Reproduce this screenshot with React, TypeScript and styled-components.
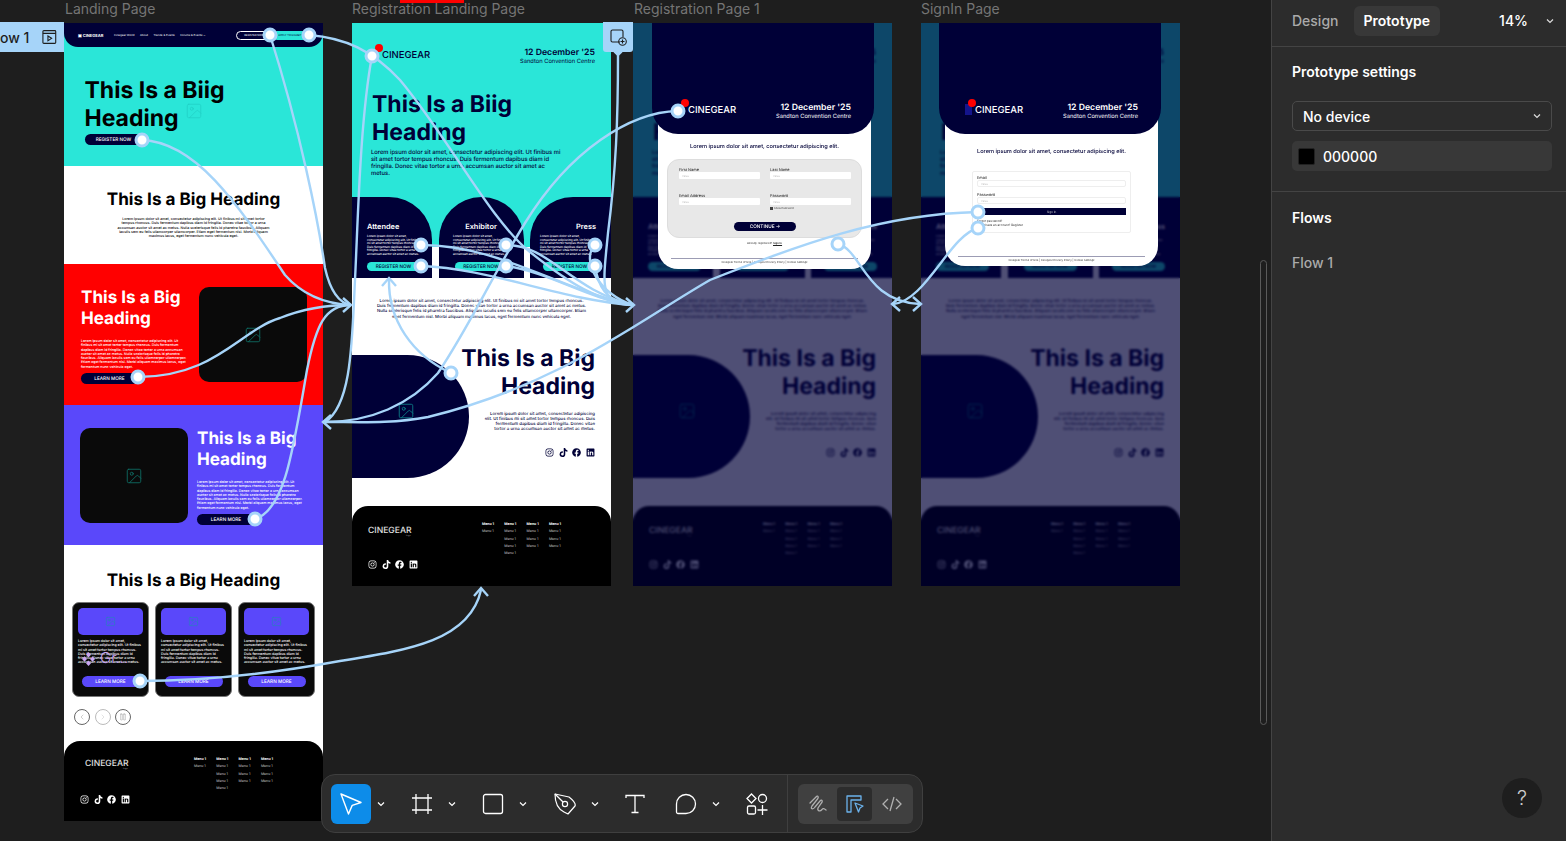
import React from 'react'
import styled, { createGlobalStyle } from 'styled-components'
import { Image, ChevronLeft, ChevronRight, Pause } from 'lucide-react'
import { FaInstagram, FaTiktok, FaFacebook, FaLinkedin } from 'react-icons/fa'

const navy = '#000037'
const teal = '#2ae6d8'
const violet = '#5a48fa'
const wire = '#a6d4f9'

const LOREM_SHORT =
  'Lorem ipsum dolor sit amet, consectetur adipiscing elit. Ut finibus mi sit amet tortor tempus rhoncus. Duis fermentum dapibus diam id fringilla. Donec vitae tortor a urna accumsan auctor sit amet ac metus.'
const LOREM_LONG =
  LOREM_SHORT +
  ' Nulla scelerisque felis id pharetra faucibus. Aliquam iaculis sem eu felis ullamcorper ullamcorper. Etiam eget fermentum nisl. Morbi aliquam maximus lacus, eget fermentum nunc vehicula eget.'

const Global = createGlobalStyle`
  html, body { margin: 0; height: 100%; background: #1e1e1e; overflow: hidden; }
  body { font-family: Inter, "Liberation Sans", sans-serif; }
  #root { height: 100%; }
  * { box-sizing: border-box; }
`

const Shell = styled.div`
  display: flex;
  width: 1566px;
  height: 841px;
`

const Canvas = styled.main`
  position: relative;
  flex: 1;
  overflow: hidden;
  background: #1e1e1e;
`

const FrameLabel = styled.div<{ $x: number }>`
  position: absolute;
  top: 0;
  left: ${p => p.$x}px;
  font-size: 14px;
  line-height: 17px;
  color: #757575;
`

/* text in the frames is zoomed out, so it needs linear glyph advances */
const Frame = styled.section<{ $x: number }>`
  position: absolute;
  z-index: 0;
  top: 23px;
  left: ${p => p.$x}px;
  width: 259px;
  display: flex;
  flex-direction: column;
  overflow: hidden;
  background: #fff;
  text-rendering: geometricPrecision;
`

const Lorem = styled.p<{ $size: number; $lh: number; $color?: string; $align?: string; $w?: number }>`
  margin: 0;
  font-size: ${p => p.$size}px;
  line-height: ${p => p.$lh}px;
  font-weight: 500;
  color: ${p => p.$color || '#000'};
  text-align: ${p => p.$align || 'left'};
  ${p => (p.$w ? `width: ${p.$w}px;` : '')}
`

const Heading = styled.h2<{ $size?: number; $lh?: number; $color?: string; $align?: string }>`
  margin: 0;
  font-size: ${p => p.$size || 23}px;
  line-height: ${p => p.$lh || 28}px;
  font-weight: 700;
  white-space: nowrap;
  color: ${p => p.$color || '#000'};
  text-align: ${p => p.$align || 'left'};
`

const Pill = styled.div<{ $bg?: string; $color?: string; $w: number; $h?: number }>`
  display: flex;
  align-items: center;
  justify-content: center;
  width: ${p => p.$w}px;
  height: ${p => p.$h || 11}px;
  border-radius: 99px;
  background: ${p => p.$bg || navy};
  color: ${p => p.$color || '#fff'};
  font-size: 4.7px;
  font-weight: 500;
  white-space: nowrap;
`

/* landing page */
const Hero = styled.div`
  position: relative;
  height: 143px;
  background: ${teal};
`

const Nav = styled.nav`
  display: flex;
  align-items: center;
  height: 24px;
  padding: 0 14px;
  background: ${navy};
  border-radius: 0 0 14px 14px;
  color: #fff;
  font-size: 2.8px;
`

const NavBrand = styled.div`
  display: flex;
  align-items: center;
  gap: 1px;
  width: 36px;
  font-size: 4px;
  font-weight: 700;
`

const NavLinks = styled.div`
  display: flex;
  gap: 5.5px;
  flex: 1;
`

const NavButtons = styled.div`
  display: flex;
  margin-right: 1px;
`

const NavButton = styled.div<{ $filled?: boolean }>`
  display: flex;
  align-items: center;
  justify-content: center;
  width: 36px;
  height: 9px;
  border-radius: 9px;
  border: 0.5px solid ${p => (p.$filled ? teal : '#fff')};
  background: ${p => (p.$filled ? teal : 'transparent')};
  color: ${p => (p.$filled ? navy : '#fff')};
  font-size: 2.6px;
`

const HeroBody = styled.div`
  display: flex;
  flex-direction: column;
  gap: 2px;
  padding: 29px 0 0 20.5px;
`

const FloatingIcon = styled.div<{ $x: number; $y: number; $color: string }>`
  position: absolute;
  left: ${p => p.$x}px;
  top: ${p => p.$y}px;
  display: flex;
  color: ${p => p.$color};
  svg { width: 18px; height: 18px; }
`

const Intro = styled.div`
  display: flex;
  flex-direction: column;
  align-items: center;
  gap: 6px;
  height: 98px;
  padding-top: 23px;
  background: #fff;
`

const Split = styled.div<{ $bg: string; $reverse?: boolean }>`
  display: flex;
  flex-direction: ${p => (p.$reverse ? 'row-reverse' : 'row')};
  justify-content: flex-end;
  align-items: flex-start;
  gap: 9px;
  height: ${p => (p.$reverse ? 140 : 141)}px;
  padding: 23px 16px 0;
  background: ${p => p.$bg};
`

const SplitText = styled.div`
  display: flex;
  flex-direction: column;
  align-items: flex-start;
  width: 109px;
  color: #fff;
`

const SplitHeading = styled(Heading)`
  margin-bottom: 10px;
`

const SplitLorem = styled(Lorem)`
  margin-bottom: 4px;
  height: 30px;
`

const Picture = styled.div`
  display: flex;
  align-items: center;
  justify-content: center;
  flex: none;
  width: 108px;
  height: 95px;
  border-radius: 10px;
  background: #0a0a0a;
  color: #0e6b62;
  svg { width: 18px; height: 18px; }
`

const CardSection = styled.div`
  display: flex;
  flex-direction: column;
  align-items: center;
  height: 196px;
  padding-top: 25px;
`

const CardRow = styled.div`
  display: flex;
  gap: 6px;
  margin-top: 10px;
  position: relative;
`

const Card = styled.div`
  display: flex;
  flex-direction: column;
  width: 77px;
  height: 95px;
  padding: 5px 5px 0;
  border-radius: 7px;
  background: #0a0a0a;
  border: 0.5px solid #777;
`

const CardArt = styled.div`
  display: flex;
  align-items: center;
  justify-content: center;
  flex: none;
  height: 27px;
  border-radius: 5px;
  background: ${violet};
  color: #2a7fc0;
  svg { width: 11px; height: 11px; }
`

const CardText = styled(Lorem)`
  margin-top: 4px;
  height: 29px;
  color: #fff;
`

const CardButton = styled(Pill)`
  flex: none;
  margin: 8px auto 0;
`

const BadgeLabel = styled.div`
  position: absolute;
  left: 10px;
  top: 47px;
  display: flex;
  align-items: flex-end;
  gap: 5px;
  color: #c9a5f3;
  font-size: 15px;
  line-height: 17px;
  font-weight: 300;
`

const Controls = styled.div`
  display: flex;
  gap: 4.5px;
  align-self: flex-start;
  margin: 12px 0 0 10px;
`

const RoundControl = styled.div<{ $soft?: boolean }>`
  display: flex;
  align-items: center;
  justify-content: center;
  width: 16px;
  height: 16px;
  border-radius: 50%;
  border: 0.7px solid ${p => (p.$soft ? '#bbb' : '#666')};
  color: ${p => (p.$soft ? '#aaa' : '#666')};
  svg { width: 8px; height: 8px; }
`

/* footer */
const FooterBar = styled.footer`
  display: flex;
  height: 80px;
  padding: 15px 0 0 16px;
  background: #000;
  border-radius: 16px 16px 0 0;
  color: #fff;
`

const FooterLeft = styled.div`
  display: flex;
  flex-direction: column;
  width: 114px;
`

const FooterLogo = styled.div<{ $inset: number; $lift: number }>`
  position: relative;
  margin: ${p => 6 - p.$lift}px 0 ${p => p.$lift - 1}px ${p => p.$inset}px;
  font-size: 8.6px;
  line-height: 10px;
  font-weight: 500;
  color: #e0e0e0;
`

const TinyMark = styled.span`
  position: absolute;
  left: 38px;
  top: 9px;
  font-size: 2px;
  line-height: 3px;
  color: #999;
`

const Socials = styled.div<{ $color?: string; $mt?: number }>`
  display: flex;
  gap: 4.6px;
  margin-top: ${p => p.$mt ?? 24}px;
  color: ${p => p.$color || '#fff'};
  svg { width: 9px; height: 9px; display: block; }
`

const MenuGrid = styled.div`
  display: flex;
  gap: 9.3px;
`

const MenuColumn = styled.div`
  display: flex;
  flex-direction: column;
  width: 13px;
`

const MenuItem = styled.span<{ $head?: boolean }>`
  font-size: 3.5px;
  line-height: 7.3px;
  white-space: nowrap;
  font-weight: ${p => (p.$head ? 700 : 400)};
  color: ${p => (p.$head ? '#fff' : '#c8c8c8')};
`

/* registration landing */
const RegHero = styled.div`
  height: 174px;
  padding: 25px 16px 0 20px;
  background: ${teal};
  color: ${navy};
`

const BrandRow = styled.div<{ $color?: string }>`
  display: flex;
  justify-content: space-between;
  align-items: flex-start;
  color: ${p => p.$color || navy};
`

const Brand = styled.div`
  position: relative;
  margin: 2px 0 0 10px;
  font-size: 9.5px;
  line-height: 12px;
  font-weight: 500;
`

const BrandDot = styled.span`
  position: absolute;
  left: -7px;
  top: -6px;
  width: 8px;
  height: 8px;
  border-radius: 50%;
  background: #ff0000;
`

const BrandBlock = styled.span`
  position: absolute;
  left: -10px;
  top: -1px;
  width: 7px;
  height: 11px;
  background: #14148c;
`

const EventInfo = styled.div`
  text-align: right;
  font-size: 8.7px;
  line-height: 10px;
  font-weight: 600;
`

const Venue = styled.div`
  font-size: 5.75px;
  line-height: 8px;
  font-weight: 400;
`

const RegHeroHeading = styled(Heading)`
  margin-top: 24px;
`

const RegHeroLorem = styled(Lorem)`
  margin: 2.5px 0 0 -1px;
`

const ArchRow = styled.div`
  display: grid;
  grid-template-columns: 80px 85px 81px;
  column-gap: 6.5px;
  height: 81px;
  background: linear-gradient(${teal} 50px, #fff 50px);
`

const Arch = styled.div<{ $radius: string; $align: string }>`
  display: flex;
  flex-direction: column;
  align-items: ${p => p.$align};
  padding: 26px 15px 7px;
  border-radius: ${p => p.$radius};
  background: ${navy};
  color: #fff;
  text-align: ${p => (p.$align === 'flex-end' ? 'right' : p.$align === 'center' ? 'center' : 'left')};
`

const ArchTitle = styled.div`
  font-size: 7.4px;
  line-height: 8px;
  font-weight: 600;
`

const ArchLorem = styled(Lorem)`
  margin-top: 4px;
  width: 56px;
  color: #fff;
`

const ArchButton = styled(Pill)`
  margin-top: auto;
  flex: none;
`

const RegBody = styled.div`
  display: flex;
  flex-direction: column;
  height: 228px;
  padding-top: 21px;
`

const RegRow = styled.div`
  display: flex;
  justify-content: space-between;
  margin-top: 24px;
`

const Blob = styled.div`
  display: flex;
  align-items: center;
  justify-content: center;
  flex: none;
  width: 117px;
  height: 123px;
  margin-top: 11px;
  padding: 0 9px 10px 0;
  border-radius: 0 62px 62px 0;
  background: ${navy};
  color: #0c7c86;
  svg { width: 18px; height: 18px; }
`

const RegRight = styled.div`
  display: flex;
  flex-direction: column;
  align-items: flex-end;
  flex: none;
  margin-left: -20px;
  padding-right: 16px;
`

const RegRightLorem = styled(Lorem)`
  margin-top: 12px;
`

/* dialogs */
const Dim = styled.div`
  position: absolute;
  inset: 0;
  background: rgba(0, 0, 55, 0.69);
  backdrop-filter: blur(1px);
`

const Dialog = styled.div<{ $left: number }>`
  position: absolute;
  top: 0;
  left: ${p => p.$left}px;
  width: 222px;
  display: flex;
  flex-direction: column;
`

const DialogHead = styled.div`
  position: relative;
  z-index: 1;
  height: 111px;
  padding: 80px 23px 0 26px;
  border-radius: 0 0 26px 26px;
  background: ${navy};
`

const DialogBody = styled.div<{ $h: number }>`
  display: flex;
  flex-direction: column;
  align-items: center;
  height: ${p => p.$h}px;
  margin: -14px 3px 0 6px;
  padding-top: 14px;
  border-radius: 0 0 20px 20px;
  background: #fff;
`

const DialogLead = styled(Lorem)<{ $mt: number }>`
  margin-top: ${p => p.$mt}px;
  color: ${navy};
`

const GreyForm = styled.div`
  display: grid;
  grid-template-columns: 81px 81px;
  column-gap: 10px;
  align-content: start;
  width: 195px;
  height: 79px;
  margin-top: 8px;
  padding: 8px 11px;
  border-radius: 12px;
  background: #e8e8e8;
  border: 0.5px solid #ddd;
`

const Field = styled.div<{ $h?: number }>`
  display: flex;
  flex-direction: column;
  height: ${p => p.$h || 26}px;
`

const FieldLabel = styled.span`
  font-size: 3.9px;
  line-height: 4px;
  color: #222;
`

const FieldInput = styled.div`
  display: flex;
  align-items: center;
  height: 7px;
  padding-left: 3px;
  background: #fff;
  border-radius: 1px;
  font-size: 2.6px;
  color: #bbb;
`

const ShowPassword = styled.div`
  display: flex;
  align-items: center;
  gap: 1px;
  margin-top: 1px;
  font-size: 2.6px;
  color: #333;
`

const TickBox = styled.i`
  width: 3px;
  height: 3px;
  background: #444;
`

const Continue = styled(Pill)`
  grid-column: 1 / 3;
  justify-self: center;
  margin-top: 2px;
`

const SmallNote = styled.div<{ $mt: number }>`
  margin-top: ${p => p.$mt}px;
  font-size: 2.75px;
  line-height: 4px;
  color: #222;
  white-space: nowrap;
  u { font-weight: 600; }
`

const Rule = styled.hr<{ $mt: number }>`
  width: 187px;
  margin: ${p => p.$mt}px 0 0;
  border: 0;
  border-top: 0.6px solid #9c9cb4;
`

const SignCard = styled.div`
  display: flex;
  flex-direction: column;
  width: 159px;
  height: 62px;
  margin-top: 15px;
  padding: 4px 4px 0;
  border: 0.5px solid #eee;
  border-radius: 2px;
`

const SignInput = styled(FieldInput)`
  border: 0.5px solid #eee;
  border-radius: 2px;
`

const SignButton = styled.div`
  display: flex;
  align-items: center;
  justify-content: center;
  height: 7px;
  margin-top: -2px;
  background: ${navy};
  color: #ccc;
  font-size: 3px;
`

const SignLinks = styled.div`
  margin-top: 4px;
  font-size: 3px;
  line-height: 4.4px;
  color: #222;
`

/* overlays on the canvas */
const Wires = styled.svg`
  position: absolute;
  inset: 0;
  width: 100%;
  height: 100%;
  pointer-events: none;
`

const FlowChip = styled.div`
  position: absolute;
  left: 0;
  top: 22px;
  display: flex;
  align-items: center;
  justify-content: flex-end;
  gap: 13px;
  width: 64px;
  height: 30px;
  padding-right: 7px;
  background: ${wire};
  color: #1e1e1e;
  font-size: 14px;
  font-weight: 500;
  white-space: nowrap;
`

const AddTab = styled.div`
  position: absolute;
  left: 603px;
  top: 22px;
  display: flex;
  align-items: center;
  justify-content: center;
  width: 30px;
  height: 30px;
  background: ${wire};
  border-radius: 0 0 3px 3px;
  &::after {
    content: '';
    position: absolute;
    left: 11px;
    top: 25px;
    width: 8px;
    height: 8px;
    background: ${wire};
    border-radius: 2px;
    transform: rotate(45deg);
  }
`

const RedMark = styled.div`
  position: absolute;
  left: 400px;
  top: 0;
  width: 64px;
  height: 3px;
  background: #ff0000;
`

const ScrollThumb = styled.div`
  position: absolute;
  left: 1260px;
  top: 260px;
  width: 7px;
  height: 465px;
  border: 1px solid #5a5a5a;
  border-radius: 4px;
`

const Toolbar = styled.div`
  position: absolute;
  left: 321px;
  top: 774px;
  display: flex;
  align-items: center;
  width: 602px;
  height: 59px;
  padding-left: 9px;
  background: #2c2c2c;
  border: 1px solid #3f3f3f;
  border-radius: 14px;
`

const ToolGroup = styled.div<{ $gap?: number }>`
  display: flex;
  align-items: center;
  margin-right: ${p => p.$gap ?? 13}px;
  color: #fff;
`

const ToolButton = styled.div<{ $active?: boolean }>`
  display: flex;
  align-items: center;
  justify-content: center;
  width: 40px;
  height: 40px;
  border-radius: 6px;
  background: ${p => (p.$active ? '#0d8ce9' : 'transparent')};
`

const ToolChevron = styled.div`
  display: flex;
  justify-content: center;
  width: 16px;
  margin-left: 2px;
`

const ToolDivider = styled.div`
  width: 1px;
  height: 59px;
  margin: 0 10px 0 0;
  background: #3f3f3f;
`

const ModeGroup = styled.div`
  display: flex;
  align-items: center;
  width: 115px;
  height: 40px;
  padding: 0 2px;
  border-radius: 6px;
  background: #404040;
`

const ModeButton = styled.div<{ $active?: boolean }>`
  display: flex;
  align-items: center;
  justify-content: center;
  width: 36px;
  height: 34px;
  margin-right: 2px;
  border-radius: 4px;
  background: ${p => (p.$active ? '#2c2c2c' : 'transparent')};
`

const Panel = styled.aside`
  position: relative;
  flex: none;
  width: 295px;
  background: #2c2c2c;
  border-left: 1px solid #444;
  color: #fff;
  font-size: 14px;
`

const PanelTabs = styled.div`
  display: flex;
  align-items: center;
  height: 47px;
  padding: 0 12px 5px 20px;
  border-bottom: 1px solid #444;
  font-weight: 500;
`

const Tab = styled.div<{ $active?: boolean }>`
  display: flex;
  align-items: center;
  height: 30px;
  padding: 0 10px;
  margin-left: ${p => (p.$active ? 5 : 0)}px;
  ${p => (p.$active ? '' : 'padding-left: 0;')}
  border-radius: 6px;
  background: ${p => (p.$active ? '#383838' : 'transparent')};
  color: ${p => (p.$active ? '#fff' : '#aaa')};
  font-weight: ${p => (p.$active ? 600 : 500)};
`

const Zoom = styled.div`
  margin-left: auto;
  margin-right: 18px;
`

const PanelBlock = styled.div`
  padding: 16px 14px 20px 20px;
  border-bottom: 1px solid #444;
`

const PanelTitle = styled.div`
  font-weight: 600;
  line-height: 18px;
`

const SelectBox = styled.div`
  display: flex;
  align-items: center;
  justify-content: space-between;
  height: 30px;
  margin-top: 20px;
  padding: 0 10px;
  border: 1px solid #4a4a4a;
  border-radius: 5px;
  font-weight: 500;
`

const ColorBox = styled.div`
  display: flex;
  align-items: center;
  gap: 8px;
  height: 30px;
  margin-top: 10px;
  padding: 0 6px;
  border-radius: 5px;
  background: #383838;
  font-weight: 500;
`

const Swatch = styled.i`
  width: 17px;
  height: 17px;
  border-radius: 2px;
  background: #000;
  border: 1px solid #222;
`

const FlowsBlock = styled.div`
  padding: 17px 20px;
`

const FlowName = styled.div`
  margin-top: 27px;
  line-height: 18px;
  color: #aaa;
  font-weight: 500;
`

const HelpButton = styled.div`
  position: absolute;
  right: 24px;
  bottom: 23px;
  display: flex;
  align-items: center;
  justify-content: center;
  width: 40px;
  height: 40px;
  border-radius: 50%;
  background: #1e1e1e;
  color: #ccc;
  font-size: 20px;
  font-weight: 300;
`

const Chevron = ({ color = '#fff' }: { color?: string }) => (
  <svg width="8" height="6" viewBox="0 0 8 6" fill="none">
    <path d="M1 1.5 4 4.5 7 1.5" stroke={color} strokeWidth="1.2" />
  </svg>
)

const SocialIcons = ({ color, mt }: { color?: string; mt?: number }) => (
  <Socials $color={color} $mt={mt}>
    <FaInstagram />
    <FaTiktok />
    <FaFacebook />
    <FaLinkedin />
  </Socials>
)

const menuRows = [2, 5, 4, 4]

const Footer = ({ inset, lift }: { inset: number; lift: number }) => (
  <FooterBar>
    <FooterLeft>
      <FooterLogo $inset={inset} $lift={lift}>
        CINEGEAR
        <TinyMark>Logo</TinyMark>
      </FooterLogo>
      <SocialIcons />
    </FooterLeft>
    <MenuGrid>
      {menuRows.map((rows, c) => (
        <MenuColumn key={c}>
          {Array.from({ length: rows }).map((_, r) => (
            <MenuItem key={r} $head={r === 0}>
              Menu 1
            </MenuItem>
          ))}
        </MenuColumn>
      ))}
    </MenuGrid>
  </FooterBar>
)

const LandingPage = () => (
  <Frame $x={64}>
    <Hero>
      <Nav>
        <NavBrand>▣ CINEGEAR</NavBrand>
        <NavLinks>
          <span>Cinegear World</span>
          <span>About</span>
          <span>Trends & Events</span>
          <span>Forums & Events ⌄</span>
        </NavLinks>
        <NavButtons>
          <NavButton>REGISTER NOW</NavButton>
          <NavButton $filled>APPLY TO EXHIBIT</NavButton>
        </NavButtons>
      </Nav>
      <HeroBody>
        <Heading>
          This Is a Biig
          <br />
          Heading
        </Heading>
        <Pill $w={58}>REGISTER NOW</Pill>
      </HeroBody>
      <FloatingIcon $x={121} $y={79} $color="#22cfc4">
        <Image strokeWidth={1} />
      </FloatingIcon>
    </Hero>
    <Intro>
      <Heading $size={17.1} $lh={22}>
        This Is a Big Heading
      </Heading>
      <Lorem $size={3.6} $lh={4.3} $align="center" $w={153}>
        {LOREM_LONG}
      </Lorem>
    </Intro>
    <Split $bg="#ff0000">
      <SplitText>
        <SplitHeading $size={17.1} $lh={21} $color="#fff">
          This Is a Big
          <br />
          Heading
        </SplitHeading>
        <SplitLorem $size={3.5} $lh={4.3} $color="#fff">
          {LOREM_LONG}
        </SplitLorem>
        <Pill $w={57}>LEARN MORE</Pill>
      </SplitText>
      <Picture>
        <Image strokeWidth={1.2} />
      </Picture>
    </Split>
    <Split $bg={violet} $reverse>
      <SplitText>
        <SplitHeading $size={17.1} $lh={21} $color="#fff">
          This Is a Big
          <br />
          Heading
        </SplitHeading>
        <SplitLorem $size={3.5} $lh={4.3} $color="#fff">
          {LOREM_LONG}
        </SplitLorem>
        <Pill $w={58}>LEARN MORE</Pill>
      </SplitText>
      <Picture>
        <Image strokeWidth={1.2} />
      </Picture>
    </Split>
    <CardSection>
      <Heading $size={17.1} $lh={22}>
        This Is a Big Heading
      </Heading>
      <CardRow>
        {[0, 1, 2].map(i => (
          <Card key={i}>
            <CardArt>
              <Image strokeWidth={1.5} />
            </CardArt>
            <CardText $size={3.55} $lh={4.3}>
              {LOREM_SHORT}
            </CardText>
            <CardButton $w={58} $bg={violet}>
              LEARN MORE
            </CardButton>
          </Card>
        ))}
        <BadgeLabel>
          <svg width="13" height="14" viewBox="0 0 13 14" fill="currentColor">
            <path d="M6.5 0 9 2.8 6.5 5.6 4 2.8ZM6.5 8.4 9 11.2 6.5 14 4 11.2ZM2.5 4.2 5 7 2.5 9.8 0 7ZM10.5 4.2 13 7 10.5 9.8 8 7Z" />
          </svg>
          <span>Gr...</span>
        </BadgeLabel>
      </CardRow>
      <Controls>
        <RoundControl>
          <ChevronLeft strokeWidth={1} />
        </RoundControl>
        <RoundControl $soft>
          <ChevronRight strokeWidth={1} />
        </RoundControl>
        <RoundControl>
          <Pause strokeWidth={1} />
        </RoundControl>
      </Controls>
    </CardSection>
    <Footer inset={5} lift={3} />
  </Frame>
)

const RegistrationLanding = () => (
  <>
    <RegHero>
      <BrandRow>
        <Brand>
          <BrandDot />
          CINEGEAR
        </Brand>
        <EventInfo>
          12 December '25
          <Venue>Sandton Convention Centre</Venue>
        </EventInfo>
      </BrandRow>
      <RegHeroHeading $color={navy}>
        This Is a Biig
        <br />
        Heading
      </RegHeroHeading>
      <RegHeroLorem $size={5.8} $lh={7} $color={navy} $w={191}>
        {LOREM_SHORT}
      </RegHeroLorem>
    </RegHero>
    <ArchRow>
      <Arch $radius="0 43px 0 0" $align="flex-start">
        <ArchTitle>Attendee</ArchTitle>
        <ArchLorem $size={3} $lh={3.6}>
          {LOREM_SHORT}
        </ArchLorem>
        <ArchButton $w={53} $h={9} $bg={teal} $color={navy}>
          REGISTER NOW
        </ArchButton>
      </Arch>
      <Arch $radius="43px 43px 0 0" $align="center">
        <ArchTitle>Exhibitor</ArchTitle>
        <ArchLorem $size={3} $lh={3.6}>
          {LOREM_SHORT}
        </ArchLorem>
        <ArchButton $w={53} $h={9} $bg={teal} $color={navy}>
          REGISTER NOW
        </ArchButton>
      </Arch>
      <Arch $radius="43px 0 0 0" $align="flex-end">
        <ArchTitle>Press</ArchTitle>
        <ArchLorem $size={3} $lh={3.6}>
          {LOREM_SHORT}
        </ArchLorem>
        <ArchButton $w={53} $h={9} $bg={teal} $color={navy}>
          REGISTER NOW
        </ArchButton>
      </Arch>
    </ArchRow>
    <RegBody>
      <Lorem $size={4.25} $lh={5.2} $align="center" $color={navy}>
        Lorem ipsum dolor sit amet, consectetur adipiscing elit. Ut finibus mi sit amet tortor tempus rhoncus.
        <br />
        Duis fermentum dapibus diam id fringilla. Donec vitae tortor a urna accumsan auctor sit amet ac metus.
        <br />
        Nulla scelerisque felis id pharetra faucibus. Aliquam iaculis sem eu felis ullamcorper ullamcorper. Etiam
        <br />
        eget fermentum nisl. Morbi aliquam maximus lacus, eget fermentum nunc vehicula eget.
      </Lorem>
      <RegRow>
        <Blob>
          <Image strokeWidth={1.2} />
        </Blob>
        <RegRight>
          <Heading $color={navy} $align="right">
            This Is a Big
            <br />
            Heading
          </Heading>
          <RegRightLorem $size={4.3} $lh={5.2} $align="right" $color={navy} $w={112}>
            {LOREM_SHORT}
          </RegRightLorem>
          <SocialIcons color={navy} mt={15} />
        </RegRight>
      </RegRow>
    </RegBody>
    <Footer inset={0} lift={1} />
  </>
)

const DialogBrand = ({ block }: { block?: boolean }) => (
  <BrandRow $color="#fff">
    <Brand>
      {block && <BrandBlock />}
      <BrandDot />
      CINEGEAR
    </Brand>
    <EventInfo>
      12 December '25
      <Venue>Sandton Convention Centre</Venue>
    </EventInfo>
  </BrandRow>
)

const FOOT_LINKS = 'Cinegear Terms of Use | Cinegear Privacy Policy | Cookie Settings'

const RegistrationPage = () => (
  <Frame $x={633}>
    <RegistrationLanding />
    <Dim />
    <Dialog $left={19}>
      <DialogHead>
        <DialogBrand />
      </DialogHead>
      <DialogBody $h={149}>
        <DialogLead $size={5.65} $lh={7} $mt={10} $align="center">
          Lorem ipsum dolor sit amet, consectetur adipiscing elit.
        </DialogLead>
        <GreyForm>
          <Field>
            <FieldLabel>First Name</FieldLabel>
            <FieldInput>Value</FieldInput>
          </Field>
          <Field>
            <FieldLabel>Last Name</FieldLabel>
            <FieldInput>Value</FieldInput>
          </Field>
          <Field>
            <FieldLabel>Email Address</FieldLabel>
            <FieldInput>Value</FieldInput>
          </Field>
          <Field>
            <FieldLabel>Password</FieldLabel>
            <FieldInput>Value</FieldInput>
            <ShowPassword>
              <TickBox />
              Show Password
            </ShowPassword>
          </Field>
          <Continue $w={62} $h={9}>
            CONTINUE →
          </Continue>
        </GreyForm>
        <SmallNote $mt={3}>
          Already registered? <u>Sign In</u>
        </SmallNote>
        <Rule $mt={13} />
        <SmallNote $mt={1}>{FOOT_LINKS}</SmallNote>
      </DialogBody>
    </Dialog>
  </Frame>
)

const SignInPage = () => (
  <Frame $x={921}>
    <RegistrationLanding />
    <Dim />
    <Dialog $left={18}>
      <DialogHead>
        <DialogBrand block />
      </DialogHead>
      <DialogBody $h={146}>
        <DialogLead $size={5.65} $lh={7} $mt={15} $align="center">
          Lorem ipsum dolor sit amet, consectetur adipiscing elit.
        </DialogLead>
        <SignCard>
          <Field $h={17}>
            <FieldLabel>Email</FieldLabel>
            <SignInput>Value</SignInput>
          </Field>
          <Field $h={17}>
            <FieldLabel>Password</FieldLabel>
            <SignInput>Value</SignInput>
          </Field>
          <SignButton>Sign In</SignButton>
          <SignLinks>
            Forgot password?
            <br />
            Don't have an account? Register
          </SignLinks>
        </SignCard>
        <Rule $mt={23} />
        <SmallNote $mt={1}>{FOOT_LINKS}</SmallNote>
      </DialogBody>
    </Dialog>
  </Frame>
)

const wirePaths = [
  'M270 35 C300 130 318 220 325 268 C330 290 338 303 351 305',
  'M309 35 C345 38 372 50 400 80 C450 140 490 220 530 252 C570 284 600 302 633 305',
  'M372 56 C360 120 358 220 355 280 C352 340 352 405 325 422',
  'M142 140 C195 142 235 200 285 275 C305 298 330 304 351 305',
  'M138 377 C215 377 240 330 280 318 C305 308 330 305 351 305',
  'M255 519 C285 510 293 450 307 370 C316 325 325 305 351 305',
  'M140 681 C210 681 280 672 340 661 C410 650 470 640 481 590',
  'M678 111 C630 112 570 150 525 223 C490 280 470 325 438 373 C410 405 370 422 325 422',
  'M618 55 C618 120 616 170 608 233 C603 285 598 305 633 305',
  'M421 245 C500 245 560 290 633 305',
  'M421 266 C490 268 560 300 633 305',
  'M506 245 C550 245 570 290 633 305',
  'M506 266 C550 272 590 300 633 305',
  'M595 245 C580 260 600 295 633 305',
  'M595 266 C598 285 605 302 633 305',
  'M451 373 C412 355 388 320 389 279',
  'M978 212 C880 214 800 245 710 280 C640 320 560 385 428 417 C390 424 360 422 325 422',
  'M838 244 C862 250 865 302 920 304',
  'M978 228 C950 235 925 302 893 304',
]

const arrowHeads = [
  'M343 298 L351 305 L343 312',
  'M626 298 L634 305 L626 312',
  'M331 415 L323 422 L331 429',
  'M474 596 L481 588 L488 596',
  'M382 286 L389 278 L396 286',
  'M913 297 L921 304 L913 311',
  'M900 297 L892 304 L900 311',
]

const handles = [
  [270, 35],
  [309, 35],
  [142, 140],
  [372, 56],
  [138, 377],
  [255, 519],
  [140, 681],
  [421, 245],
  [421, 266],
  [506, 245],
  [506, 266],
  [595, 245],
  [595, 266],
  [451, 373],
  [678, 111],
  [838, 244],
  [978, 212],
  [978, 228],
]

const ToolbarIcons = {
  move: (
    <svg width="24" height="24" viewBox="0 0 24 24" fill="none" stroke="#fff" strokeWidth="1.4" strokeLinejoin="round">
      <path d="M2 2 22 10.5 13.2 13.4 9.5 22Z" />
    </svg>
  ),
  frame: (
    <svg width="22" height="22" viewBox="0 0 22 22" fill="none" stroke="#fff" strokeWidth="1.3">
      <path d="M5 1V21M17 1V21M1 5H21M1 17H21" />
    </svg>
  ),
  rect: (
    <svg width="22" height="22" viewBox="0 0 22 22" fill="none" stroke="#fff" strokeWidth="1.3">
      <rect x="1.5" y="1.5" width="19" height="19" rx="2" />
    </svg>
  ),
  pen: (
    <svg width="24" height="24" viewBox="0 0 24 24" fill="none" stroke="#fff" strokeWidth="1.2" strokeLinejoin="round">
      <path d="M2 2 16 5C21 9 23 12 22 14L15 22 11 20C5 17 2 10 2 2Z" />
      <path d="M2 2 10 10" />
      <circle cx="12" cy="12" r="2.6" />
    </svg>
  ),
  text: (
    <svg width="22" height="20" viewBox="0 0 22 20" fill="none" stroke="#fff" strokeWidth="1.3">
      <path d="M2 4V1.5H20V4M11 1.5V18.5M7.5 18.5H14.5" />
    </svg>
  ),
  shape: (
    <svg width="22" height="22" viewBox="0 0 22 22" fill="none" stroke="#fff" strokeWidth="1.3">
      <path d="M1.5 19V11A9.5 9.5 0 1 1 11 20.5H3A1.5 1.5 0 0 1 1.5 19Z" />
    </svg>
  ),
  more: (
    <svg width="24" height="24" viewBox="0 0 24 24" fill="none" stroke="#fff" strokeWidth="1.3">
      <path d="M6.5 2 11 6.5 6.5 11 2 6.5Z" />
      <circle cx="17.5" cy="6.5" r="4" />
      <rect x="2.5" y="14" width="8" height="8" rx="1.5" />
      <path d="M17.5 13V23M12.5 18H22.5" />
    </svg>
  ),
  draw: (
    <svg width="20" height="20" viewBox="0 0 20 20" fill="none" stroke="#b0b0b0" strokeWidth="1.3" strokeLinecap="round">
      <path d="M2 9 8 3C10 1 11 3 9.5 5L4 12C2 15 5 16 7 13L12 7C14 5 15 7 13.5 9L10 14C9 17 12 18 14 15.5 15 14 16 14.5 18 16" />
    </svg>
  ),
  proto: (
    <svg width="20" height="20" viewBox="0 0 20 20" fill="none" stroke="#6bb2ec" strokeWidth="1.3" strokeLinejoin="round">
      <path d="M2 18V2H16V6H6V18Z" />
      <path d="M10 9 18 12 15 14 13.5 18Z" />
    </svg>
  ),
  code: (
    <svg width="20" height="16" viewBox="0 0 20 16" fill="none" stroke="#b0b0b0" strokeWidth="1.3">
      <path d="M6 3 1 8 6 13M14 3 19 8 14 13M12 1 8 15" />
    </svg>
  ),
}

const App = () => (
  <Shell>
    <Global />
    <Canvas>
      <FrameLabel $x={65}>Landing Page</FrameLabel>
      <FrameLabel $x={352}>Registration Landing Page</FrameLabel>
      <FrameLabel $x={634}>Registration Page 1</FrameLabel>
      <FrameLabel $x={921}>SignIn Page</FrameLabel>
      <RedMark />
      <LandingPage />
      <Frame $x={352}>
        <RegistrationLanding />
      </Frame>
      <RegistrationPage />
      <SignInPage />
      <FlowChip>
        ow 1
        <svg width="16" height="16" viewBox="0 0 16 16" fill="none" stroke="#1e1e1e" strokeWidth="1.2">
          <rect x="1" y="1" width="14" height="14" rx="1" />
          <path d="M1 4H15M6.5 7 10.5 9.5 6.5 12Z" />
        </svg>
      </FlowChip>
      <AddTab>
        <svg width="17" height="17" viewBox="0 0 17 17" fill="none" stroke="#1e1e1e" strokeWidth="1.1">
          <path d="M10 13H2.5A1.5 1.5 0 0 1 1 11.5V2.5A1.5 1.5 0 0 1 2.5 1H11.5A1.5 1.5 0 0 1 13 2.5V8" />
          <circle cx="12.5" cy="12.5" r="3.8" />
          <path d="M12.5 10.5V14.5M10.5 12.5H14.5" />
        </svg>
      </AddTab>
      <Wires viewBox="0 0 1271 841" fill="none">
        {wirePaths.map((d, i) => (
          <path key={i} d={d} stroke={wire} strokeWidth="2.4" />
        ))}
        {arrowHeads.map((d, i) => (
          <path key={i} d={d} stroke={wire} strokeWidth="2.4" />
        ))}
        {handles.map(([cx, cy], i) => (
          <circle key={i} cx={cx} cy={cy} r="6" fill="#fff" stroke={wire} strokeWidth="3" />
        ))}
      </Wires>
      <ScrollThumb />
      <Toolbar>
        <ToolGroup>
          <ToolButton $active>{ToolbarIcons.move}</ToolButton>
          <ToolChevron>
            <Chevron />
          </ToolChevron>
        </ToolGroup>
        <ToolGroup>
          <ToolButton>{ToolbarIcons.frame}</ToolButton>
          <ToolChevron>
            <Chevron />
          </ToolChevron>
        </ToolGroup>
        <ToolGroup $gap={14}>
          <ToolButton>{ToolbarIcons.rect}</ToolButton>
          <ToolChevron>
            <Chevron />
          </ToolChevron>
        </ToolGroup>
        <ToolGroup $gap={12}>
          <ToolButton>{ToolbarIcons.pen}</ToolButton>
          <ToolChevron>
            <Chevron />
          </ToolChevron>
        </ToolGroup>
        <ToolGroup $gap={11}>
          <ToolButton>{ToolbarIcons.text}</ToolButton>
        </ToolGroup>
        <ToolGroup>
          <ToolButton>{ToolbarIcons.shape}</ToolButton>
          <ToolChevron>
            <Chevron />
          </ToolChevron>
        </ToolGroup>
        <ToolGroup $gap={10}>
          <ToolButton>{ToolbarIcons.more}</ToolButton>
        </ToolGroup>
        <ToolDivider />
        <ModeGroup>
          <ModeButton>{ToolbarIcons.draw}</ModeButton>
          <ModeButton $active>{ToolbarIcons.proto}</ModeButton>
          <ModeButton>{ToolbarIcons.code}</ModeButton>
        </ModeGroup>
      </Toolbar>
    </Canvas>
    <Panel>
      <PanelTabs>
        <Tab>Design</Tab>
        <Tab $active>Prototype</Tab>
        <Zoom>14%</Zoom>
        <Chevron color="#ddd" />
      </PanelTabs>
      <PanelBlock>
        <PanelTitle>Prototype settings</PanelTitle>
        <SelectBox>
          No device
          <Chevron color="#ddd" />
        </SelectBox>
        <ColorBox>
          <Swatch />
          000000
        </ColorBox>
      </PanelBlock>
      <FlowsBlock>
        <PanelTitle>Flows</PanelTitle>
        <FlowName>Flow 1</FlowName>
      </FlowsBlock>
      <HelpButton>?</HelpButton>
    </Panel>
  </Shell>
)

export default App
